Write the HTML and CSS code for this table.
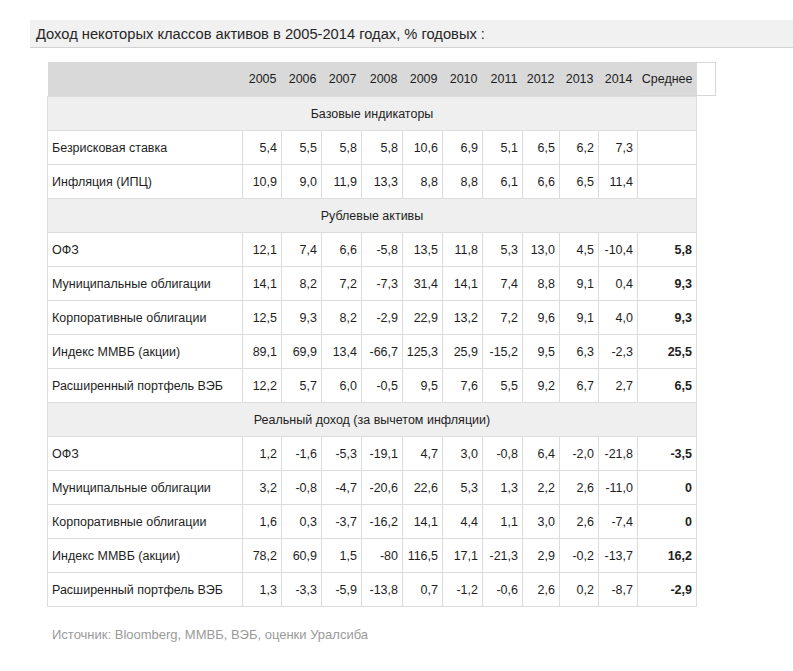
FILE: index.html
```html
<!DOCTYPE html>
<html lang="ru">
<head>
<meta charset="utf-8">
<title>Доход некоторых классов активов</title>
<link rel="stylesheet" href="styles.css">
</head>
<body>
<div class="title">Доход некоторых классов активов в 2005-2014 годах, % годовых :</div>
<table class="data">
<colgroup>
<col class="c-label"><col class="c39"><col class="c40"><col class="c40"><col class="c41"><col class="c40"><col class="c40"><col class="c40"><col class="c37"><col class="c39"><col class="c39"><col class="c-avg">
</colgroup>
<thead>
<tr class="head"><th></th><th>2005</th><th>2006</th><th>2007</th><th>2008</th><th>2009</th><th>2010</th><th>2011</th><th>2012</th><th>2013</th><th>2014</th><th class="avg-h">Среднее</th></tr>
</thead>
<tbody>
<tr class="sect"><td colspan="12">Базовые индикаторы</td></tr>
<tr><td>Безрисковая ставка</td><td>5,4</td><td>5,5</td><td>5,8</td><td>5,8</td><td>10,6</td><td>6,9</td><td>5,1</td><td>6,5</td><td>6,2</td><td>7,3</td><td class="avg"></td></tr>
<tr><td>Инфляция (ИПЦ)</td><td>10,9</td><td>9,0</td><td>11,9</td><td>13,3</td><td>8,8</td><td>8,8</td><td>6,1</td><td>6,6</td><td>6,5</td><td>11,4</td><td class="avg"></td></tr>
<tr class="sect"><td colspan="12">Рублевые активы</td></tr>
<tr><td>ОФЗ</td><td>12,1</td><td>7,4</td><td>6,6</td><td>-5,8</td><td>13,5</td><td>11,8</td><td>5,3</td><td>13,0</td><td>4,5</td><td>-10,4</td><td class="avg">5,8</td></tr>
<tr><td>Муниципальные облигации</td><td>14,1</td><td>8,2</td><td>7,2</td><td>-7,3</td><td>31,4</td><td>14,1</td><td>7,4</td><td>8,8</td><td>9,1</td><td>0,4</td><td class="avg">9,3</td></tr>
<tr><td>Корпоративные облигации</td><td>12,5</td><td>9,3</td><td>8,2</td><td>-2,9</td><td>22,9</td><td>13,2</td><td>7,2</td><td>9,6</td><td>9,1</td><td>4,0</td><td class="avg">9,3</td></tr>
<tr><td>Индекс ММВБ (акции)</td><td>89,1</td><td>69,9</td><td>13,4</td><td>-66,7</td><td>125,3</td><td>25,9</td><td>-15,2</td><td>9,5</td><td>6,3</td><td>-2,3</td><td class="avg">25,5</td></tr>
<tr><td>Расширенный портфель ВЭБ</td><td>12,2</td><td>5,7</td><td>6,0</td><td>-0,5</td><td>9,5</td><td>7,6</td><td>5,5</td><td>9,2</td><td>6,7</td><td>2,7</td><td class="avg">6,5</td></tr>
<tr class="sect"><td colspan="12">Реальный доход (за вычетом инфляции)</td></tr>
<tr><td>ОФЗ</td><td>1,2</td><td>-1,6</td><td>-5,3</td><td>-19,1</td><td>4,7</td><td>3,0</td><td>-0,8</td><td>6,4</td><td>-2,0</td><td>-21,8</td><td class="avg">-3,5</td></tr>
<tr><td>Муниципальные облигации</td><td>3,2</td><td>-0,8</td><td>-4,7</td><td>-20,6</td><td>22,6</td><td>5,3</td><td>1,3</td><td>2,2</td><td>2,6</td><td>-11,0</td><td class="avg">0</td></tr>
<tr><td>Корпоративные облигации</td><td>1,6</td><td>0,3</td><td>-3,7</td><td>-16,2</td><td>14,1</td><td>4,4</td><td>1,1</td><td>3,0</td><td>2,6</td><td>-7,4</td><td class="avg">0</td></tr>
<tr><td>Индекс ММВБ (акции)</td><td>78,2</td><td>60,9</td><td>1,5</td><td>-80</td><td>116,5</td><td>17,1</td><td>-21,3</td><td>2,9</td><td>-0,2</td><td>-13,7</td><td class="avg">16,2</td></tr>
<tr><td>Расширенный портфель ВЭБ</td><td>1,3</td><td>-3,3</td><td>-5,9</td><td>-13,8</td><td>0,7</td><td>-1,2</td><td>-0,6</td><td>2,6</td><td>0,2</td><td>-8,7</td><td class="avg">-2,9</td></tr>
</tbody>
</table>
<p class="source">Источник: Bloomberg, ММВБ, ВЭБ, оценки Уралсиба</p>
</body>
</html>
```

FILE: styles.css
```css
html, body {
  margin: 0;
  padding: 0;
  background: #ffffff;
  font-family: "Liberation Sans", Arial, sans-serif;
  color: #1e1e1e;
}

.title {
  margin: 20px 0 0 30px;
  height: 27px;
  line-height: 28px;
  padding-left: 6px;
  background: #f1f1f1;
  border-bottom: 1px solid #d2d2d2;
  font-size: 14.7px;
  color: #262626;
}

.data {
  margin: 14px 0 0 47px;
  border-collapse: collapse;
  table-layout: fixed;
  width: 649px;
  font-size: 12.5px;
}

.c-label { width: 195px; }
.c37 { width: 37px; }
.c39 { width: 39px; }
.c40 { width: 40px; }
.c41 { width: 41px; }
.c-avg { width: 59px; }

.data td,
.data th {
  height: 33px;
  padding: 0 4px 0 0;
  text-align: right;
  vertical-align: middle;
  white-space: nowrap;
}

.data td {
  border: 1px solid #dcdcdc;
}

.data td:first-child {
  text-align: left;
  padding-left: 4px;
}

.head th {
  height: 34px;
  background: #d9d9d9;
  font-weight: normal;
  border: none;
  padding-right: 5px;
}

.head .avg-h {
  position: relative;
  padding-right: 4px;
}

.head .avg-h::after {
  content: "";
  position: absolute;
  left: 0;
  top: 0;
  width: 78px;
  height: 34px;
  border: 1px solid #d6d6d6;
  border-left: none;
  box-sizing: border-box;
  pointer-events: none;
}

.sect td,
.data .sect td:first-child {
  background: #efefef;
  text-align: center;
  padding: 0;
}

.data td.avg {
  font-weight: bold;
  padding-right: 4px;
}

.source {
  margin: 20px 0 0 52px;
  font-size: 13px;
  color: #9a9a9a;
}
```
